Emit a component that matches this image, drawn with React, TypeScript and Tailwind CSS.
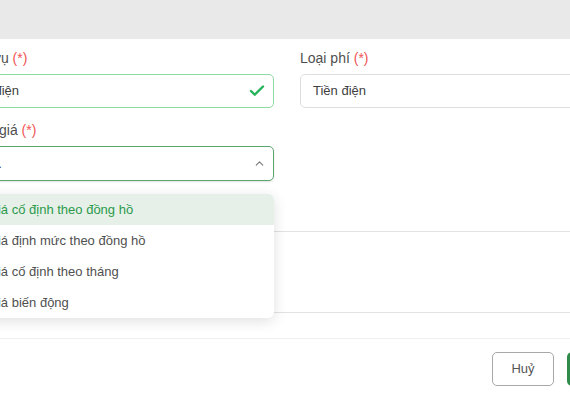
import React from "react";
import { Check, ChevronUp } from "lucide-react";

const Req = () => <span className="text-[#f05454]">(*)</span>;

export default function App() {
  const options = [
    "Đơn giá cố định theo đồng hồ",
    "Đơn giá định mức theo đồng hồ",
    "Đơn giá cố định theo tháng",
    "Đơn giá biến động",
  ];
  return (
    <div className="w-[570px] h-[400px] overflow-hidden bg-white font-['Liberation_Sans',Arial,sans-serif]">
      <div className="h-[39px] bg-[#e9e9e9]" />
      <div className="-ml-[50px] w-[674px] pt-[9px]">
        <div className="grid grid-cols-2 gap-x-[26px]">
          <div>
            <div className="h-[20px] mb-[6px] pl-[12px] text-[14px] leading-[20px] text-[#505050] whitespace-nowrap">
              Dịch vụ <Req />
            </div>
            <div className="h-[34px] flex items-center justify-between rounded-[5px] border border-[#8ddca5] pl-[15px] pr-[7px] text-[13px] text-[#404040]">
              <span>Tiền điện</span>
              <Check size={18} strokeWidth={3.2} className="text-[#25b35a]" />
            </div>
          </div>
          <div>
            <div className="h-[20px] mb-[6px] text-[14px] leading-[20px] text-[#505050] whitespace-nowrap">
              Loại phí <Req />
            </div>
            <div className="h-[34px] flex items-center rounded-[5px] border border-[#dedede] px-[12px] text-[13px] text-[#404040]">
              Tiền điện
            </div>
          </div>
        </div>
        <div className="grid grid-cols-2 gap-x-[26px] mt-[12px]">
          <div className="relative">
            <div className="h-[20px] mb-[6px] -ml-[10px] text-[14px] leading-[20px] text-[#505050] whitespace-nowrap">
              Loại đơn giá <Req />
            </div>
            <div className="h-[35px] flex items-center justify-between rounded-[5px] border border-[#5aa66f] shadow-[0_1px_2px_rgba(0,0,0,0.12)] pl-[9px] pr-[7px] text-[13px] text-[#404040]">
              <span>Chọn...</span>
              <ChevronUp size={13} strokeWidth={2} className="text-[#777]" />
            </div>
            <div className="absolute left-0 right-0 top-[calc(100%+13px)] z-10 rounded-[6px] bg-white shadow-[0_3px_14px_rgba(0,0,0,0.13)] overflow-hidden">
              {options.map((o, i) => (
                <div
                  key={o}
                  className={
                    i === 0
                      ? "h-[31px] flex items-center px-[12px] text-[13px] bg-[#e6f0e9] text-[#2c9a4b] whitespace-nowrap"
                      : "h-[31px] flex items-center px-[12px] text-[13px] text-[#505050] whitespace-nowrap"
                  }
                >
                  {o}
                </div>
              ))}
            </div>
          </div>
          <div />
        </div>
        <div className="mt-[24px]">
          <div className="h-[20px] mb-[6px]" />
          <div className="h-[82px] rounded-[5px] border border-[#e2e2e2]" />
        </div>
      </div>
      <div className="mt-[25px] border-t border-[#efefef] w-[661px] flex justify-end gap-[13px] px-[16px] pt-[13px]">
        <button className="w-[62px] h-[34px] rounded-[5px] border border-[#a8a8a8] text-[13px] text-[#555] bg-white">
          Huỷ
        </button>
        <button className="w-[78px] h-[34px] rounded-[5px] bg-[#2e8b4a] text-[13px] text-white">
          Lưu
        </button>
      </div>
    </div>
  );
}
